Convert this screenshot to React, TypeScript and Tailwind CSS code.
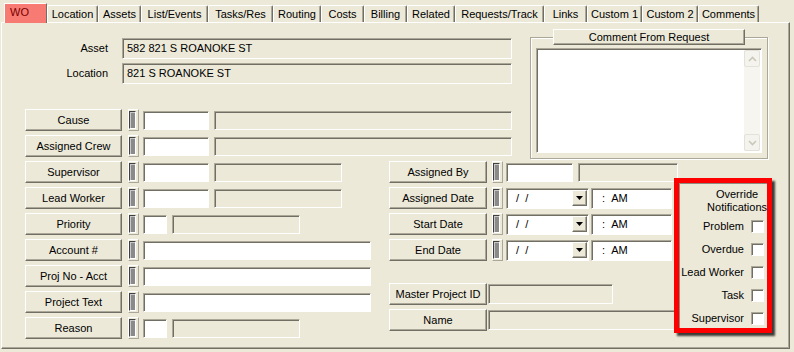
const raised =
  "bg-[#ECE9D8] border border-t-white border-l-white border-r-[#716F64] border-b-[#716F64] shadow-[inset_-1px_-1px_0_#ACA899]";
const sunken =
  "border border-t-[#ACA899] border-l-[#ACA899] border-r-white border-b-white shadow-[inset_1px_1px_0_#716F64]";

const tabs: [string, string][] = [
  ["Location", "w-[51px]"],
  ["Assets", "w-[43px]"],
  ["List/Events", "w-[67px]"],
  ["Tasks/Res", "w-[65px]"],
  ["Routing", "w-[48px]"],
  ["Costs", "w-[43px]"],
  ["Billing", "w-[43px]"],
  ["Related", "w-[48px]"],
  ["Requests/Track", "w-[89px]"],
  ["Links", "w-[43px]"],
  ["Custom 1", "w-[55px]"],
  ["Custom 2", "w-[56px]"],
  ["Comments", "w-[61px]"],
];

function Btn({ label, w }: { label: string; w: string }) {
  return (
    <div className={`${raised} ${w} h-[22px] shrink-0 flex items-center justify-center whitespace-nowrap`}>
      {label}
    </div>
  );
}

// little "locked" indicator next to each lookup button
function Lock() {
  return (
    <div className="w-[11px] h-[22px] shrink-0 flex py-[1px] border border-t-white border-l-white border-r-[#ACA899] border-b-[#ACA899]">
      <div className="w-[7px] border border-t-[#404040] border-l-[#404040] border-r-white border-b-white bg-[#8A8A8A] shadow-[inset_1px_1px_0_#C8C8C8]" />
    </div>
  );
}

function Box({ w, white, className = "" }: { w: string; white?: boolean; className?: string }) {
  return (
    <div className={`${sunken} ${w} h-[19px] shrink-0 ${white ? "bg-white" : "bg-[#ECE9D8]"} ${className}`} />
  );
}

type Kind = "wide" | "mid" | "small" | "long";

function LeftRow({ label, kind }: { label: string; kind: Kind }) {
  return (
    <div className="flex items-center h-[22px]">
      <Btn label={label} w="w-[97px]" />
      <div className="ml-[6px]">
        <Lock />
      </div>
      {kind === "long" ? (
        <Box w="w-[228px]" white className="ml-[4px]" />
      ) : kind === "small" ? (
        <>
          <Box w="w-[24px]" white className="ml-[4px]" />
          <Box w="w-[128px]" className="ml-[5px]" />
        </>
      ) : (
        <>
          <Box w="w-[66px]" white className="ml-[4px]" />
          <Box w={kind === "wide" ? "w-[298px]" : "w-[128px]"} className="ml-[5px]" />
        </>
      )}
    </div>
  );
}

function DateRow({ label }: { label: string }) {
  return (
    <div className="flex items-center h-[22px]">
      <Btn label={label} w="w-[98px]" />
      <div className="ml-[5px]">
        <Lock />
      </div>
      <div className={`${sunken} ml-[3px] w-[83px] h-[21px] bg-white flex items-center pl-[9px] pr-[1px]`}>
        <span>/&nbsp;&nbsp;/</span>
        <div className={`${raised} ml-auto w-[15px] h-[16px] flex items-center justify-center`}>
          <svg width="7" height="4" viewBox="0 0 7 4">
            <path d="M0 0h7L3.5 4z" fill="#000" />
          </svg>
        </div>
      </div>
      <div className={`${sunken} ml-[2px] w-[81px] h-[21px] bg-white flex items-center pl-[10px]`}>
        <span>:&nbsp;&nbsp;AM</span>
      </div>
    </div>
  );
}

function ScrollArrow({ up }: { up?: boolean }) {
  return (
    <div className="h-[17px] w-[16px] rounded-[2px] border border-[#E4E2D8] bg-[#F4F3EE] flex items-center justify-center">
      <svg width="9" height="6" viewBox="0 0 9 6">
        <path
          d={up ? "M1 5L4.5 1.5L8 5" : "M1 1L4.5 4.5L8 1"}
          fill="none"
          stroke="#CBC8BA"
          strokeWidth="1.6"
        />
      </svg>
    </div>
  );
}

function Check({ label }: { label: string }) {
  return (
    <div className="flex items-center justify-end h-[23px] pr-[3px]">
      <span>{label}</span>
      <div className={`${sunken} ml-[7px] w-[13px] h-[13px] bg-white`} />
    </div>
  );
}

export default function App() {
  return (
    <div className="w-[794px] h-[352px] bg-[#ECE9D8] font-['Liberation_Sans',Arial,sans-serif] text-[11px] leading-[13px] text-black overflow-hidden">
      {/* tab strip */}
      <div className="h-[22px] flex items-end pl-[4px]">
        <div className="relative z-10 -mb-[1px] h-[20px] w-[43px] shrink-0 border-l border-t border-white border-r border-r-[#716F64] bg-[#F77B72] text-[#7A0000] flex items-center pl-[5px] pb-[2px]">
          WO
        </div>
        {tabs.map(([t, w]) => (
          <div
            key={t}
            className={`${w} h-[17px] shrink-0 rounded-t-[2px] border-l border-t border-white border-r border-r-[#716F64] shadow-[inset_-1px_0_0_#ACA899] flex items-center justify-center whitespace-nowrap`}
          >
            {t}
          </div>
        ))}
      </div>

      {/* tab panel */}
      <div className="ml-[1px] w-[789px] h-[327px] border border-t-white border-l-white border-r-[#716F64] border-b-[#716F64] shadow-[inset_-1px_-1px_0_#ACA899] flex flex-col">
        {/* upper section */}
        <div className="flex">
          <div className="w-[512px] pt-[15px] flex flex-col">
            <div className="flex items-center h-[21px]">
              <div className="w-[106px] text-right">Asset</div>
              <div className={`${sunken} ml-[14px] w-[390px] h-[21px] bg-[#ECE9D8] flex items-center pl-[4px]`}>
                582 821 S ROANOKE ST
              </div>
            </div>
            <div className="flex items-center h-[21px] mt-[4px]">
              <div className="w-[106px] text-right">Location</div>
              <div className={`${sunken} ml-[14px] w-[390px] h-[21px] bg-[#ECE9D8] flex items-center pl-[4px]`}>
                821 S ROANOKE ST
              </div>
            </div>
            <div className="pl-[23px] mt-[25px] flex flex-col gap-[4px] pb-[4px]">
              <LeftRow label="Cause" kind="wide" />
              <LeftRow label="Assigned Crew" kind="wide" />
            </div>
          </div>

          {/* comment group */}
          <div className="relative ml-[16px] mt-[14px] w-[238px] h-[122px] border border-[#ACA899] shadow-[inset_1px_1px_0_white,1px_1px_0_white] pt-[10px] pl-[5px]">
            <div className={`${raised} absolute -top-[9px] left-[22px] w-[192px] h-[16px] flex items-center justify-center`}>
              Comment From Request
            </div>
            <div className={`${sunken} w-[226px] h-[105px] bg-white flex justify-end p-[1px]`}>
              <div className="w-[16px] h-full bg-[#F6F5F0] flex flex-col justify-between">
                <ScrollArrow up />
                <ScrollArrow />
              </div>
            </div>
          </div>
        </div>

        {/* lower section */}
        <div className="flex">
          <div className="w-[387px] pl-[23px] flex flex-col gap-[4px]">
            <LeftRow label="Supervisor" kind="mid" />
            <LeftRow label="Lead Worker" kind="mid" />
            <LeftRow label="Priority" kind="small" />
            <LeftRow label="Account #" kind="long" />
            <LeftRow label="Proj No - Acct" kind="long" />
            <LeftRow label="Project Text" kind="long" />
            <LeftRow label="Reason" kind="small" />
          </div>

          <div className="w-[289px] flex flex-col">
            <div className="flex flex-col gap-[4px]">
              <div className="flex items-center h-[22px]">
                <Btn label="Assigned By" w="w-[98px]" />
                <div className="ml-[5px]">
                  <Lock />
                </div>
                <Box w="w-[67px]" white className="ml-[3px]" />
                <Box w="w-[100px]" className="ml-[5px]" />
              </div>
              <DateRow label="Assigned Date" />
              <DateRow label="Start Date" />
              <DateRow label="End Date" />
            </div>
            <div className="mt-[22px] flex flex-col gap-[4px]">
              <div className="flex items-center h-[22px]">
                <Btn label="Master Project ID" w="w-[98px]" />
                <Box w="w-[125px]" className="ml-[1px] h-[20px]" />
              </div>
              <div className="flex items-center h-[22px]">
                <Btn label="Name" w="w-[98px]" />
                <Box w="w-[190px]" className="ml-[1px] h-[20px]" />
              </div>
            </div>
          </div>

          {/* highlighted override notifications */}
          <div className="relative z-10 -ml-[4px] mt-[17px] w-[98px] h-[155px] border-[5px] border-[#FF0000] bg-[#ECE9D8] shadow-[3px_3px_2px_rgba(0,0,0,0.75)]">
            <div className="h-full border-t border-l border-[#8E8C80] flex flex-col">
              <div className="flex justify-end pt-[4px]">
                <div className="text-center">
                  Override
                  <br />
                  Notifications
                </div>
              </div>
              <div className="mt-[1px] flex flex-col">
                <Check label="Problem" />
                <Check label="Overdue" />
                <Check label="Lead Worker" />
                <Check label="Task" />
                <Check label="Supervisor" />
              </div>
            </div>
          </div>
        </div>
      </div>
    </div>
  );
}
